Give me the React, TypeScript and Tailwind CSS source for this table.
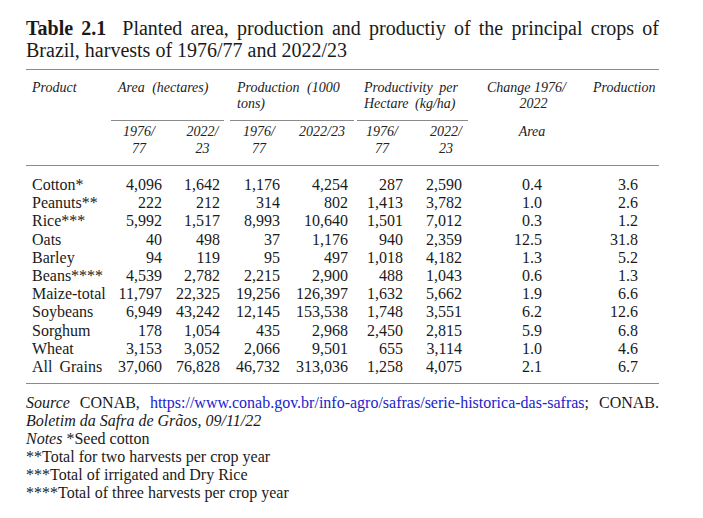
import React from "react";

const rows: [string, string, string, string, string, string, string, string, string][] = [
  ["Cotton*", "4,096", "1,642", "1,176", "4,254", "287", "2,590", "0.4", "3.6"],
  ["Peanuts**", "222", "212", "314", "802", "1,413", "3,782", "1.0", "2.6"],
  ["Rice***", "5,992", "1,517", "8,993", "10,640", "1,501", "7,012", "0.3", "1.2"],
  ["Oats", "40", "498", "37", "1,176", "940", "2,359", "12.5", "31.8"],
  ["Barley", "94", "119", "95", "497", "1,018", "4,182", "1.3", "5.2"],
  ["Beans****", "4,539", "2,782", "2,215", "2,900", "488", "1,043", "0.6", "1.3"],
  ["Maize-total", "11,797", "22,325", "19,256", "126,397", "1,632", "5,662", "1.9", "6.6"],
  ["Soybeans", "6,949", "43,242", "12,145", "153,538", "1,748", "3,551", "6.2", "12.6"],
  ["Sorghum", "178", "1,054", "435", "2,968", "2,450", "2,815", "5.9", "6.8"],
  ["Wheat", "3,153", "3,052", "2,066", "9,501", "655", "3,114", "1.0", "4.6"],
  ["All Grains", "37,060", "76,828", "46,732", "313,036", "1,258", "4,075", "2.1", "6.7"],
];

const pr = ["pr-[5px]", "pr-[4px]", "pr-[8px]", "pr-[6px]", "pr-[7px]", "pr-[8px]", "pr-[38px]", "pr-[21px]"];

const serif = { fontFamily: '"Liberation Serif", "DejaVu Serif", serif' };

export default function App() {
  return (
    <div className="w-[703px] h-[518px] bg-white text-[#1a1a1a] overflow-hidden" style={serif}>
      <div className="ml-[26px] w-[633px] pt-[17px]">
        <div className="text-[20px] leading-[22px]">
          <p className="text-justify [text-align-last:justify]">
            <span className="font-bold">Table 2.1</span>
            <span className="inline-block w-[16px]"></span>Planted area, production and productiy of the principal crops of
          </p>
          <p>Brazil, harvests of 1976/77 and 2022/23</p>
        </div>
        <div className="mt-[8px] border-t border-[#8a8a8a]"></div>

        <div className="grid grid-cols-[85px_56px_57px_64px_66px_56px_60px_110px_79px] text-[14px] italic leading-[16px] text-[#222]">
          {/* header row 1 */}
          <div className="pt-[10px] pl-[6px]">Product</div>
          <div className="col-span-2 pt-[10px] pb-[8px] pl-[7px] border-b border-[#8a8a8a] [word-spacing:4px]">
            Area (hectares)
          </div>
          <div className="col-span-2 ml-[6px] pt-[10px] pb-[8px] pl-[7px] border-b border-[#8a8a8a] [word-spacing:4px]">
            Production (1000
            <br />
            tons)
          </div>
          <div className="col-span-2 ml-[3px] mr-[2px] pt-[10px] pb-[8px] pl-[7px] border-b border-[#8a8a8a] [word-spacing:3px]">
            Productivity per
            <br />
            Hectare (kg/ha)
          </div>
          <div className="pt-[10px] pl-[17px]">
            <div className="whitespace-nowrap">Change 1976/</div>
            <div className="text-center">2022</div>
          </div>
          <div className="pt-[10px] pl-[13px]">Production</div>

          {/* header row 2 */}
          <div className="col-span-9 grid grid-cols-subgrid border-b border-[#8a8a8a] pt-[2px] pb-[8px] leading-[17px]">
            <div></div>
            <div className="text-center pl-[0px]">1976/<br />77</div>
            <div className="text-center pl-[14px]">2022/<br />23</div>
            <div className="text-center pl-[6px]">1976/<br />77</div>
            <div className="text-center pl-[2px]">2022/23</div>
            <div className="text-center pl-[0px]">1976/<br />77</div>
            <div className="text-center pl-[12px]">2022/<br />23</div>
            <div className="text-center pl-[14px]">Area</div>
            <div></div>
          </div>
        </div>

        <div className="grid grid-cols-[85px_56px_57px_64px_66px_56px_60px_110px_79px] text-[16px] leading-[18.2px] pt-[10px] pb-[7px] border-b border-[#8a8a8a] text-[#1a1a1a]">
          {rows.map((r) => (
            <React.Fragment key={r[0]}>
              <div className="pl-[6px] whitespace-nowrap [word-spacing:3px]">{r[0]}</div>
              {r.slice(1).map((v, i) => (
                <div key={i} className={`text-right ${pr[i]}`}>
                  {v}
                </div>
              ))}
            </React.Fragment>
          ))}
        </div>

        <div className="pt-[10px] text-[16px] leading-[18px] text-[#1a1a1a]">
          <p className="text-justify [text-align-last:justify]">
            <span className="italic">Source</span> CONAB,{" "}
            <span className="text-[#2222cc]">https://www.conab.gov.br/info-agro/safras/serie-historica-das-safras</span>; CONAB.
          </p>
          <p className="italic">Boletim da Safra de Grãos, 09/11/22</p>
          <p>
            <span className="italic">Notes</span> *Seed cotton
          </p>
          <p>**Total for two harvests per crop year</p>
          <p>***Total of irrigated and Dry Rice</p>
          <p>****Total of three harvests per crop year</p>
        </div>
      </div>
    </div>
  );
}
